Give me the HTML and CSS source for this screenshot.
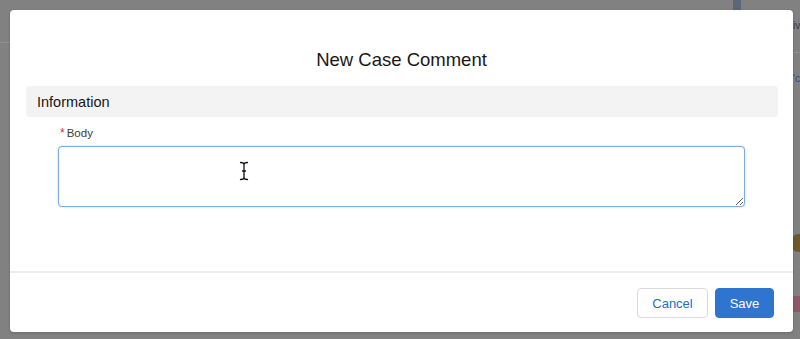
FILE: index.html
```html
<!DOCTYPE html>
<html lang="en">
<head>
<meta charset="utf-8">
<title>New Case Comment</title>
<link rel="stylesheet" href="styles.css">
</head>
<body>
<div class="backdrop">
  <span class="bg-bar"></span>
  <span class="bg-line bg-line-left"></span>
  <span class="bg-line bg-line-right"></span>
  <span class="bg-text bg-text-1">iv</span>
  <span class="bg-text bg-text-2">'c</span>
  <span class="bg-avatar"></span>
  <span class="bg-icon"></span>
</div>
<div class="modal">
  <header class="modal-header">
    <h2 class="modal-title">New Case Comment</h2>
  </header>
  <div class="modal-body">
    <div class="section-bar">Information</div>
    <div class="field">
      <label class="field-label" for="body"><abbr class="required" title="required">*</abbr>Body</label>
      <div class="textarea-wrap">
        <textarea id="body" class="textarea"></textarea>
        <svg class="ibeam" width="10" height="20" viewBox="0 0 10 20" aria-hidden="true">
          <path d="M1.5 1.5 C3.5 1.5 5 2 5 3.5 C5 2 6.5 1.5 8.5 1.5 M5 3.5 V16.5 M1.5 18.5 C3.5 18.5 5 18 5 16.5 C5 18 6.5 18.5 8.5 18.5 M3.5 10 H6.5" fill="none" stroke="#fff" stroke-width="3" stroke-linecap="round"/>
          <path d="M1.5 1.5 C3.5 1.5 5 2 5 3.5 C5 2 6.5 1.5 8.5 1.5 M5 3.5 V16.5 M1.5 18.5 C3.5 18.5 5 18 5 16.5 C5 18 6.5 18.5 8.5 18.5 M3.5 10 H6.5" fill="none" stroke="#111" stroke-width="1.3" stroke-linecap="round"/>
        </svg>
      </div>
    </div>
  </div>
  <footer class="modal-footer">
    <button class="btn btn-neutral" type="button">Cancel</button>
    <button class="btn btn-brand" type="button">Save</button>
  </footer>
</div>
</body>
</html>
```
FILE: styles.css
```css
html, body {
  margin: 0;
  padding: 0;
}
body {
  width: 800px;
  height: 339px;
  overflow: hidden;
  background: #818181;
  font-family: "Liberation Sans", Arial, sans-serif;
  color: #181818;
  position: relative;
  padding-top: 10px;
  box-sizing: border-box;
}
.backdrop {
  position: absolute;
  inset: 0;
  z-index: 0;
}
.bg-bar {
  position: absolute;
  left: 733px;
  top: 0;
  width: 8px;
  height: 14px;
  background: #5d6678;
}
.bg-line {
  position: absolute;
  height: 1px;
  background: #8f8f8f;
}
.bg-line-left { left: 0; top: 42px; width: 12px; }
.bg-line-right { left: 792px; top: 52px; width: 8px; }
.bg-text {
  position: absolute;
  left: 793px;
  font-size: 10px;
  line-height: 12px;
  color: #3a3a3a;
}
.bg-text-1 { top: 20px; }
.bg-text-2 { top: 73px; color: #1f4e80; }
.bg-avatar {
  position: absolute;
  left: 791px;
  top: 234px;
  width: 14px;
  height: 18px;
  border-radius: 50%;
  background: #6b5a2c;
}
.bg-icon {
  position: absolute;
  left: 792px;
  top: 296px;
  width: 10px;
  height: 16px;
  background: #8c5a66;
}
.modal {
  position: relative;
  z-index: 1;
  margin-left: 10px;
  width: 783px;
  height: 322px;
  background: #fff;
  border-radius: 4px;
  box-shadow: 0 1px 3px rgba(0, 0, 0, 0.18);
  display: flex;
  flex-direction: column;
  box-sizing: border-box;
}
.modal-header {
  padding: 38px 16px 0;
  height: 76px;
  box-sizing: border-box;
  text-align: center;
}
.modal-title {
  margin: 0;
  font-size: 18.5px;
  font-weight: 400;
  line-height: 24px;
  color: #181818;
  letter-spacing: 0;
}
.modal-body {
  padding: 0 15px 0 16px;
  flex: 1;
}
.section-bar {
  height: 31px;
  line-height: 32px;
  background: #f3f3f3;
  border-radius: 4px;
  padding-left: 11px;
  font-size: 14.5px;
  color: #181818;
}
.field {
  padding: 9px 0 0 32px;
}
.field-label {
  display: flex;
  align-items: center;
  font-size: 11.5px;
  color: #3e3e3c;
  line-height: 14px;
  margin-bottom: 6px;
}
.required {
  color: #c23934;
  text-decoration: none;
  border: 0;
  margin: 0 2px 0 2px;
  font-size: 12px;
}
.textarea-wrap {
  position: relative;
  width: 687px;
}
.textarea {
  display: block;
  width: 687px;
  height: 61px;
  box-sizing: border-box;
  border: 1px solid #7aaee3;
  box-shadow: 0 0 2px #a8c8ee;
  border-radius: 4px;
  background: #fff;
  font-family: inherit;
  font-size: 13px;
  padding: 6px 12px;
  outline: none;
  resize: vertical;
  margin: 0;
}
.ibeam {
  position: absolute;
  left: 181px;
  top: 15px;
}
.modal-footer {
  border-top: 2px solid #ececec;
  height: 61px;
  box-sizing: border-box;
  display: flex;
  justify-content: flex-end;
  align-items: flex-start;
  gap: 7px;
  padding: 15px 19px 0 0;
}
.btn {
  height: 30px;
  border-radius: 4px;
  font-family: inherit;
  font-size: 13px;
  padding: 0 12px;
  cursor: pointer;
  margin: 0;
}
.btn-neutral {
  width: 71px;
  background: #fff;
  border: 1px solid #dddbda;
  color: #1b6fc6;
}
.btn-brand {
  width: 59px;
  background: #2e75cf;
  border: 1px solid #2e75cf;
  color: #fff;
}
```
